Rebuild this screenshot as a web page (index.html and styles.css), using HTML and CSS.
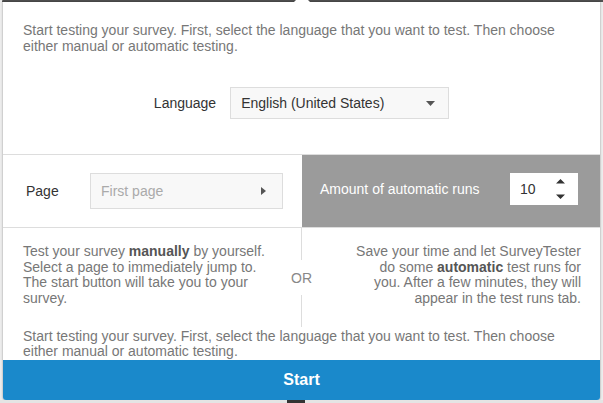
FILE: index.html
```html
<!DOCTYPE html>
<html lang="en">
<head>
<meta charset="utf-8">
<title>Start testing</title>
<link rel="stylesheet" href="styles.css">
</head>
<body>
<div class="topbar"></div>
<div class="modal">
  <span class="arrow"></span>
  <p class="intro">Start testing your survey. First, select the language that you want to test. Then choose either manual or automatic testing.</p>
  <div class="lang-row">
    <span class="label">Language</span>
    <div class="select">
      <span>English (United States)</span>
      <svg class="caret" width="9" height="5" viewBox="0 0 9 5"><path d="M0 0H9L4.5 5Z" fill="#555"/></svg>
    </div>
  </div>
  <div class="mode-row">
    <div class="manual">
      <span class="label page-label">Page</span>
      <div class="page-input">
        <span class="placeholder">First page</span>
        <svg class="caret" width="5" height="8" viewBox="0 0 5 8"><path d="M0 0L5 4L0 8Z" fill="#555"/></svg>
      </div>
    </div>
    <div class="auto">
      <span class="auto-label">Amount of automatic runs</span>
      <div class="number">
        <span>10</span>
        <svg class="spin" width="9" height="20" viewBox="0 0 9 20"><path d="M4.5 0L9 4.5H0Z M0 15.5H9L4.5 20Z" fill="#333"/></svg>
      </div>
    </div>
  </div>
  <div class="split">
    <p class="col left">
      <span class="line">Test your survey <b>manually</b> by yourself.</span>
      <span class="line">Select a page to immediately jump to.</span>
      <span class="line">The start button will take you to your survey.</span>
    </p>
    <div class="or"><span class="vline"></span><span class="or-text">OR</span><span class="vline"></span></div>
    <p class="col right">
      <span class="line">Save your time and let SurveyTester</span>
      <span class="line">do some <b>automatic</b> test runs for</span>
      <span class="line">you. After a few minutes, they will</span>
      <span class="line">appear in the test runs tab.</span>
    </p>
  </div>
  <p class="intro intro2">Start testing your survey. First, select the language that you want to test. Then choose either manual or automatic testing.</p>
  <button class="start">Start</button>
</div>
<div class="bottomstrip"><span class="blob"></span></div>
</body>
</html>
```
FILE: styles.css
```css
html, body {
  margin: 0;
  padding: 0;
}
body {
  width: 603px;
  height: 403px;
  overflow: hidden;
  background: #ececec;
  font-family: "Liberation Sans", Arial, Helvetica, sans-serif;
  font-size: 14px;
}
.topbar {
  height: 2px;
  margin-left: 2px;
  background: #505050;
  border-radius: 1px 0 0 0;
}
.modal {
  position: relative;
  width: 597px;
  margin: 0 3px;
  background: #fff;
  box-shadow: 0 0 2px rgba(0, 0, 0, 0.45);
  border-radius: 0 0 3px 3px;
}
.arrow {
  position: absolute;
  top: -2px;
  left: 291px;
  width: 16px;
  height: 2px;
  background: #fff;
  clip-path: polygon(2px 0, 14px 0, 16px 100%, 0 100%);
}
.intro {
  margin: 0;
  padding: 21px 20px 0;
  line-height: 15.7px;
  color: #777;
}
.lang-row {
  display: flex;
  justify-content: center;
  align-items: center;
  gap: 14px;
  padding: 33px 0 34.6px;
  border-bottom: 1px solid #ddd;
}
.label {
  color: #333;
}
.select {
  width: 219px;
  height: 32px;
  box-sizing: border-box;
  border: 1px solid #ddd;
  background: #f8f8f8;
  display: flex;
  align-items: center;
  justify-content: space-between;
  padding: 0 13px 0 10px;
  color: #333;
}
.mode-row {
  display: flex;
  height: 72px;
  border-bottom: 1px solid #ddd;
}
.manual {
  width: 299px;
  box-sizing: border-box;
  display: flex;
  align-items: center;
  padding-left: 23px;
}
.page-label {
  width: 64px;
}
.page-input {
  width: 193px;
  height: 36px;
  box-sizing: border-box;
  border: 1px solid #ddd;
  background: #f8f8f8;
  display: flex;
  align-items: center;
  justify-content: space-between;
  padding: 0 16px 0 10px;
}
.placeholder {
  color: #aaa;
}
.auto {
  flex: 1;
  background: #9b9b9b;
  display: flex;
  align-items: center;
  justify-content: space-between;
  padding: 0 22px 5px 18px;
  color: #fff;
}
.number {
  width: 68px;
  height: 32px;
  box-sizing: border-box;
  background: #fff;
  display: flex;
  align-items: center;
  justify-content: space-between;
  padding: 0 13px 0 10px;
  color: #333;
}
.split {
  display: grid;
  grid-template-columns: 1fr 40px 1fr;
}
.col {
  margin: 0;
  padding: 16px 0 20.2px;
  line-height: 15.7px;
  color: #777;
}
.col b {
  color: #555;
}
.line {
  display: block;
}
.left {
  padding-left: 20px;
  padding-right: 4px;
}
.right {
  text-align: right;
  padding-left: 20px;
  padding-right: 19px;
}
.or {
  display: flex;
  flex-direction: column;
  align-items: center;
}
.vline {
  flex: 1;
  width: 1px;
  background: #ddd;
}
.or-text {
  padding: 11px 0 9px;
  line-height: 15.7px;
  color: #888;
}
.intro2 {
  padding-top: 1.6px;
}
.start {
  display: block;
  width: 100%;
  height: 40px;
  margin: 0;
  border: none;
  border-radius: 0 0 3px 3px;
  background: #1a89cb;
  color: #fff;
  font-family: "Liberation Sans", Arial, Helvetica, sans-serif;
  font-size: 16px;
  font-weight: bold;
}
.bottomstrip {
  height: 3px;
  background: #e4e4e4;
  position: relative;
}
.blob {
  position: absolute;
  left: 287px;
  top: 0;
  width: 18px;
  height: 3px;
  background: #333;
}
```
